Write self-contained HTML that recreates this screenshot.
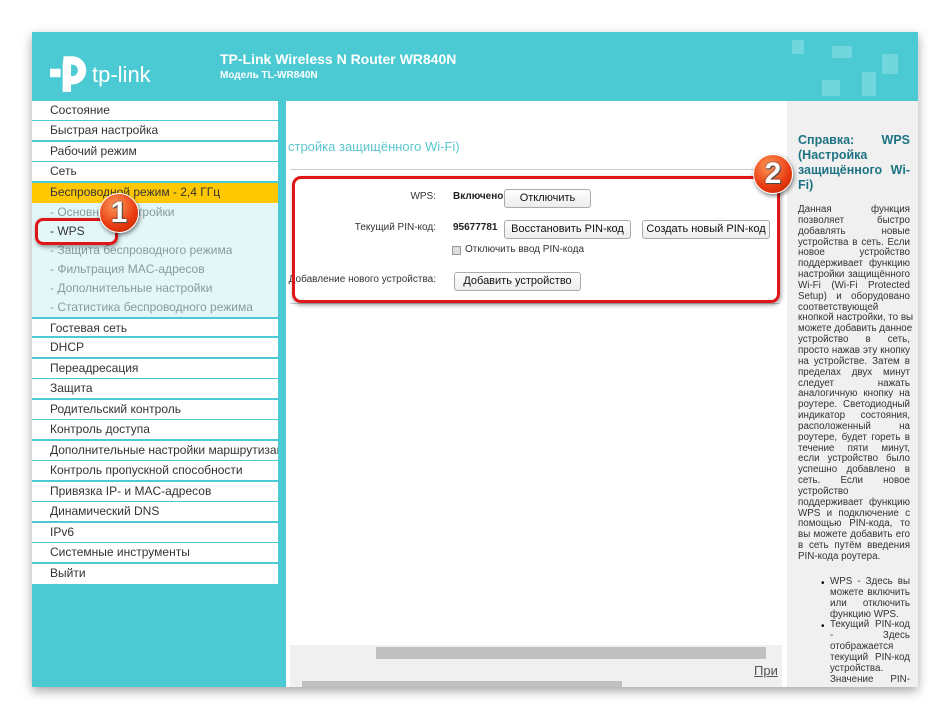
<!DOCTYPE html>
<html><head><meta charset="utf-8"><style>
*{margin:0;padding:0;box-sizing:border-box}
body{width:950px;height:719px;background:#fff;position:relative;overflow:hidden;font-family:"Liberation Sans",Arial,sans-serif}
.a{position:absolute}
#frame{left:32px;top:32px;width:886px;height:655px;background:#4ccad3;box-shadow:0 4px 10px rgba(0,0,0,.35);overflow:hidden}
.menu div{position:absolute;left:0;width:246px;font-size:12px;color:#333;padding-left:18px;background:#fff;border-bottom:2px solid #4ccad3;line-height:19px;white-space:nowrap;overflow:hidden}
.menu div.s{background:#e3f6f8;color:#8a9a9c;border-bottom:none;line-height:19px}
.help{font-size:9.8px;color:#333;line-height:10.85px}
.help div{text-align:justify;text-align-last:justify;white-space:nowrap}
.help div.l{text-align-last:left}
.btn{position:absolute;height:19px;border:1px solid #aaa;border-radius:3px;background:linear-gradient(#fff,#ececec);font-size:11px;color:#111;text-align:center;line-height:17px}
.lbl{position:absolute;font-size:10px;color:#333;text-align:right}
.badge{position:absolute;width:40px;height:40px;border-radius:50%;background:radial-gradient(circle at 40% 30%,#ff9a5a,#e83a10 60%,#b82000);box-shadow:1px 2px 4px rgba(0,0,0,.5);border:1px solid #fff;color:#fff;font-weight:bold;font-size:30px;text-align:center;line-height:38px;text-shadow:0 0 2px #333,1px 1px 0 #555}
</style></head><body>
<div id="frame" class="a">
 <div class="a" style="left:760px;top:8px;width:12px;height:14px;background:#72d6dd"></div>
 <div class="a" style="left:800px;top:14px;width:20px;height:12px;background:#72d6dd"></div>
 <div class="a" style="left:850px;top:22px;width:16px;height:20px;background:#72d6dd"></div>
 <div class="a" style="left:790px;top:48px;width:18px;height:16px;background:#72d6dd"></div>
 <div class="a" style="left:830px;top:40px;width:14px;height:24px;background:#72d6dd"></div>
 <svg class="a" style="left:17px;top:20px" width="42" height="42" viewBox="0 0 40 40"><path d="M14 4 H22 A13.5 13.5 0 0 1 22 31 H20 V23 H22 A5.5 5.5 0 0 0 22 12 H21 V38 H13 V12 Z" fill="#fff"/><rect x="1" y="16" width="10" height="8" fill="#fff"/></svg>
 <div class="a" style="left:60px;top:30px;color:#fff;font-size:22px">tp-link</div>
 <div class="a" style="left:188px;top:19px;color:#fff;font-size:14px;font-weight:bold">TP-Link Wireless N Router WR840N</div>
 <div class="a" style="left:188px;top:38px;color:#fff;font-size:10px;font-weight:bold">Модель TL-WR840N</div>
 <div class="menu">
  <div style="top:69px">Состояние</div>
  <div style="top:89px">Быстрая настройка</div>
  <div style="top:110px">Рабочий режим</div>
  <div style="top:130px">Сеть</div>
  <div style="top:151px;background:#ffc800;border-bottom:none;height:20px">Беспроводной режим - 2,4 ГГц</div>
  <div class="s" style="top:171px">- Основные настройки</div>
  <div class="s" style="top:190px;color:#333">- WPS</div>
  <div class="s" style="top:209px">- Защита беспроводного режима</div>
  <div class="s" style="top:228px">- Фильтрация MAC-адресов</div>
  <div class="s" style="top:247px">- Дополнительные настройки</div>
  <div class="s" style="top:266px;height:19px">- Статистика беспроводного режима</div>
  <div style="top:285px;border-top:2px solid #4ccad3;height:21px;line-height:18px">Гостевая сеть</div>
  <div style="top:306px;height:21px">DHCP</div>
  <div style="top:327px;height:21px">Переадресация</div>
  <div style="top:347px;height:21px">Защита</div>
  <div style="top:368px;height:21px">Родительский контроль</div>
  <div style="top:388px;height:21px">Контроль доступа</div>
  <div style="top:409px;height:21px">Дополнительные настройки маршрутизации</div>
  <div style="top:429px;height:21px">Контроль пропускной способности</div>
  <div style="top:450px;height:21px">Привязка IP- и MAC-адресов</div>
  <div style="top:470px;height:21px">Динамический DNS</div>
  <div style="top:491px;height:21px">IPv6</div>
  <div style="top:511px;height:21px">Системные инструменты</div>
  <div style="top:532px;border-bottom:none;height:20px">Выйти</div>
 </div>
 <div class="a" style="left:254px;top:69px;width:501px;height:586px;background:#fff">
  <div class="a" style="left:2px;top:38px;font-size:13px;color:#5bc6d0;white-space:nowrap">стройка защищённого Wi-Fi)</div>
  <div class="a" style="left:4px;top:68px;width:490px;height:1px;background:#ccc"></div>
  <div class="a" style="left:4px;top:202px;width:490px;height:1px;background:#ccc"></div>
  <div class="lbl" style="left:0;top:90px;width:150px">WPS:</div>
  <div class="a" style="left:167px;top:90px;font-size:10px;font-weight:bold;color:#222">Включено</div>
  <div class="btn" style="left:218px;top:88px;width:87px">Отключить</div>
  <div class="lbl" style="left:0;top:121px;width:150px">Текущий PIN-код:</div>
  <div class="a" style="left:167px;top:121px;font-size:10px;font-weight:bold;color:#222">95677781</div>
  <div class="btn" style="left:218px;top:119px;width:127px">Восстановить PIN-код</div>
  <div class="btn" style="left:356px;top:119px;width:128px">Создать новый PIN-код</div>
  <div class="a" style="left:166px;top:145px;width:9px;height:9px;border:1px solid #999;background:#ddd"></div>
  <div class="a" style="left:179px;top:143px;font-size:10px;color:#333">Отключить ввод PIN-кода</div>
  <div class="lbl" style="left:0;top:173px;width:150px;white-space:nowrap">Добавление нового устройства:</div>
  <div class="btn" style="left:168px;top:171px;width:127px">Добавить устройство</div>
  <div class="a" style="left:4px;top:544px;width:492px;height:18px;background:#f0f0f0"></div>
  <div class="a" style="left:90px;top:546px;width:390px;height:12px;background:#c0c0c0"></div>
  <div class="a" style="left:4px;top:562px;width:492px;height:24px;background:#f0f0f0"></div>
  <div class="a" style="left:468px;top:562px;font-size:13px;color:#555;text-decoration:underline">При</div>
  <div class="a" style="left:16px;top:580px;width:320px;height:6px;background:#c0c0c0"></div>
 </div>
 <div class="a" style="left:755px;top:69px;width:131px;height:586px;background:#f0f0f0">
  <div class="a" style="left:11px;top:32px;width:112px;font-size:12.5px;font-weight:bold;color:#1d7383;line-height:15px">
   <div style="text-align:justify;text-align-last:justify">Справка: WPS</div><div>(Настройка</div><div style="text-align-last:justify;text-align:justify">защищённого Wi-</div><div>Fi)</div>
  </div>
  <div class="a help" style="left:11px;top:104px;width:112px">
   <div>Данная функция</div><div>позволяет быстро</div><div>добавлять новые</div><div>устройства в сеть. Если</div><div>новое устройство</div><div>поддерживает функцию</div><div>настройки защищённого</div><div>Wi-Fi (Wi-Fi Protected</div><div>Setup) и оборудовано</div><div class="l">соответствующей</div><div>кнопкой настройки, то вы</div><div>можете добавить данное</div><div>устройство в сеть,</div><div>просто нажав эту кнопку</div><div>на устройстве. Затем в</div><div>пределах двух минут</div><div>следует нажать</div><div>аналогичную кнопку на</div><div>роутере. Светодиодный</div><div>индикатор состояния,</div><div>расположенный на</div><div>роутере, будет гореть в</div><div>течение пяти минут,</div><div>если устройство было</div><div>успешно добавлено в</div><div>сеть. Если новое</div><div class="l">устройство</div><div>поддерживает функцию</div><div>WPS и подключение с</div><div>помощью PIN-кода, то</div><div>вы можете добавить его</div><div>в сеть путём введения</div><div class="l">PIN-кода роутера.</div>
  </div>
  <div class="a" style="left:34px;top:477px;font-size:10px">•</div>
  <div class="a" style="left:34px;top:520px;font-size:10px">•</div>
  <div class="a help" style="left:43px;top:476px;width:80px">
   <div>WPS - Здесь вы</div><div>можете включить</div><div>или отключить</div><div class="l">функцию WPS.</div><div>Текущий PIN-код</div><div>- Здесь</div><div class="l">отображается</div><div>текущий PIN-код</div><div class="l">устройства.</div><div>Значение PIN-</div>
  </div>
 </div>
</div>
<div class="a" style="left:292px;top:176px;width:488px;height:127px;border:3px solid #e01515;border-radius:9px;box-shadow:1px 2px 4px rgba(0,0,0,.4)"></div>
<div class="a" style="left:35px;top:218px;width:83px;height:27px;border:3px solid #e01515;border-radius:8px;box-shadow:1px 2px 4px rgba(0,0,0,.4)"></div>
<div class="badge" style="left:99px;top:193px">1</div>
<div class="badge" style="left:753px;top:154px">2</div>
</body></html>
